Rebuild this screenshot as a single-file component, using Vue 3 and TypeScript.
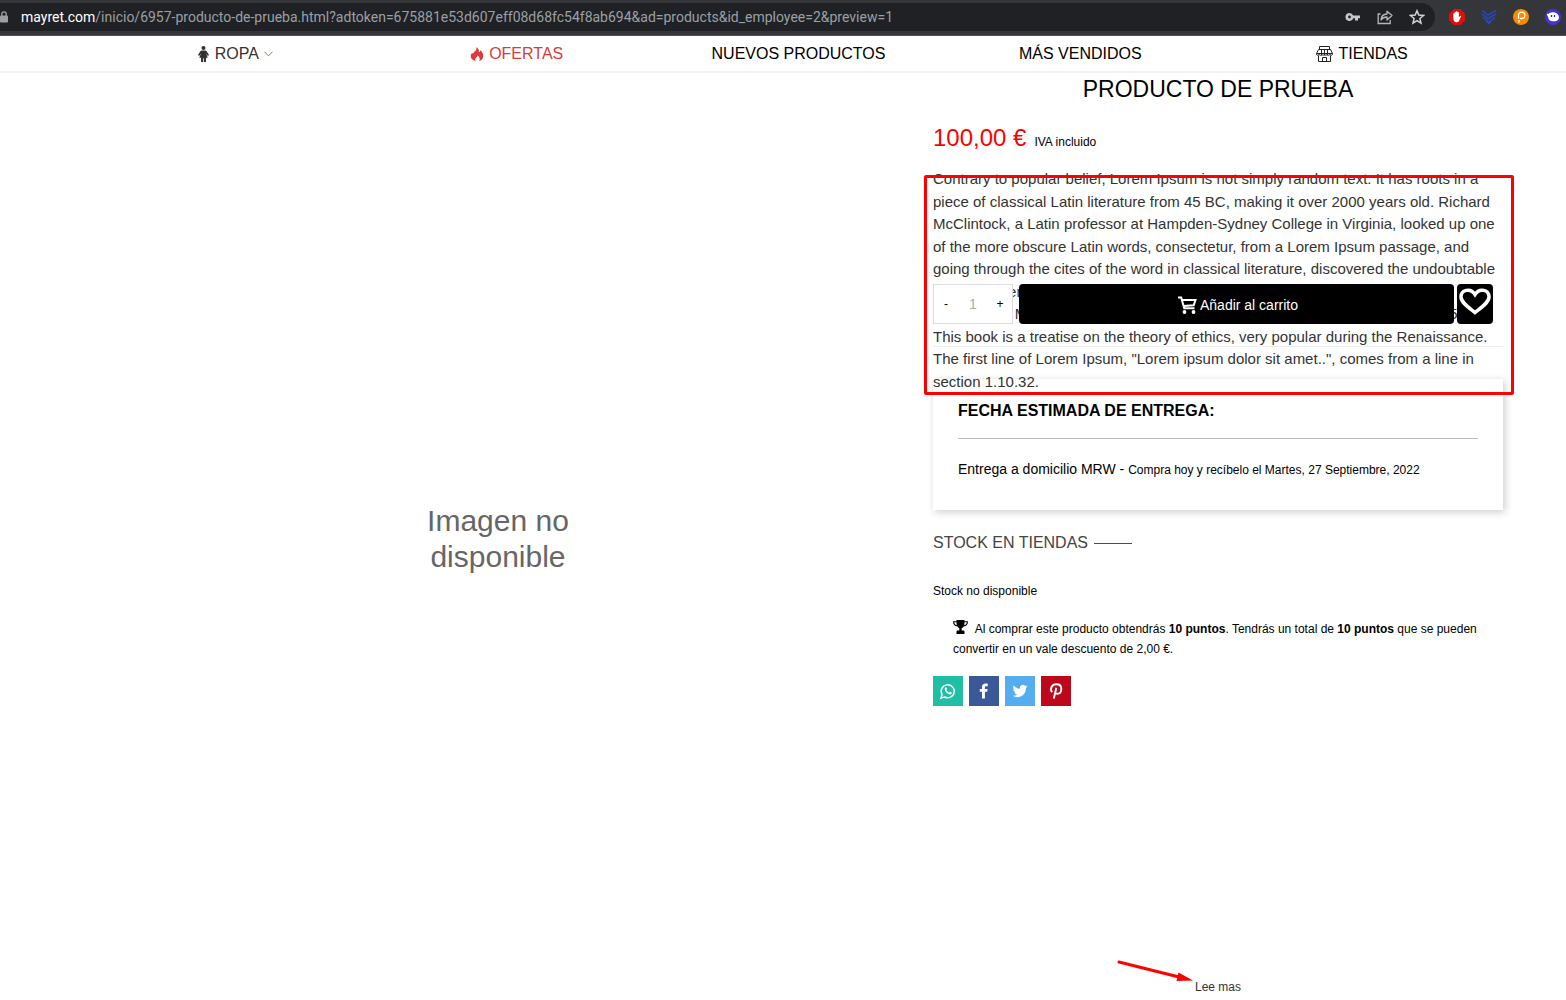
<script setup lang="ts">
import { ref } from 'vue'

const quantity = ref('1')

const description =
  'Contrary to popular belief, Lorem Ipsum is not simply random text. It has roots in a piece of classical Latin literature from 45 BC, making it over 2000 years old. Richard McClintock, a Latin professor at Hampden-Sydney College in Virginia, looked up one of the more obscure Latin words, consectetur, from a Lorem Ipsum passage, and going through the cites of the word in classical literature, discovered the undoubtable source. Lorem Ipsum comes from sections 1.10.32 and 1.10.33 of "de Finibus Bonorum et Malorum" (The Extremes of Good and Evil) by Cicero, written in 45 BC. This book is a treatise on the theory of ethics, very popular during the Renaissance. The first line of Lorem Ipsum, "Lorem ipsum dolor sit amet..", comes from a line in section 1.10.32.'

function step(delta: number) {
  quantity.value = String(Math.max(1, Number(quantity.value) + delta))
}
</script>

<template>
  <div class="page">
    <header class="browser">
      <div class="address">
        <svg class="lock" width="8" height="12" viewBox="0 0 8 12"><rect y="4.500" width="8" height="7" rx="1" fill="#9aa0a6" /><path d="M1.800 5V3a2.200 2.200 0 0 1 4.400 0v2" fill="none" stroke="#9aa0a6" stroke-width="1.300" /></svg>
        <span class="url"><b>mayret.com</b>/inicio/6957-producto-de-prueba.html?adtoken=675881e53d607eff08d68fc54f8ab694&amp;ad=products&amp;id_employee=2&amp;preview=1</span>
        <span class="tools">
          <svg width="16" height="16" viewBox="0 0 16 16"><path fill="#c4c7cb" fill-rule="evenodd" d="M4.500 4a4 4 0 1 0 3.800 5.200H10v2.300h3V9.200h2V6.500H8.200A4 4 0 0 0 4.500 4zm0 2.600a1.400 1.400 0 1 1 0 2.800 1.400 1.400 0 0 1 0-2.800z" /></svg>
          <svg width="16" height="16" viewBox="0 0 16 16" fill="none" stroke="#b4b7bb" stroke-width="1.300"><path d="M3.500 5H1.200v9.500h12V11" /><path d="M4 11c.2-4 2.500-5.800 6-6V2.200l5 4.400-5 4.400V8C7.500 8 5.500 8.800 4 11z" stroke-linejoin="round" /></svg>
          <svg width="16" height="16" viewBox="0 0 16 16"><path d="M8 1.800l1.800 4.300 4.700.4-3.600 3 1.100 4.600L8 11.600l-4 2.500 1.100-4.600-3.600-3 4.700-.4z" fill="none" stroke="#d0d2d5" stroke-width="1.500" /></svg>
        </span>
      </div>
      <div class="extensions">
        <svg width="16" height="16" viewBox="0 0 16 16"><path d="M4.700 0h6.600L16 4.700v6.600L11.300 16H4.700L0 11.300V4.700z" fill="#e40d0d" /><path d="M4.300 8.500V4.600q.7-.7 1.300 0V3.200q.8-.8 1.400 0V2.500q.8-.8 1.500 0v.8q.8-.7 1.400.1v5l1-1.400q.8-.6 1.200.1l-2 4.700q-.7 1.500-2.500 1.500-3.300 0-3.300-4.800z" fill="#fff" /></svg>
        <svg width="16" height="16" viewBox="0 0 16 16" fill="none" stroke="#2748bd" stroke-width="1.500"><path d="M1 1.500l6 4.500 8-4.500M1 5l6 4.500L15 5M2 8.500L8 13l6-4.500M5 12l3 2.500 2-1.500" /></svg>
        <svg width="16" height="16" viewBox="0 0 16 16"><circle cx="8" cy="8" r="8" fill="#fb8c00" /><path d="M5.500 10V6.300A3.200 3.200 0 1 1 8.700 9.500H7M6 11v2.500" fill="none" stroke="#fff" stroke-width="1.300" /></svg>
        <svg width="16" height="16" viewBox="0 0 16 16"><circle cx="8" cy="8" r="8" fill="#4c2fd4" /><path d="M2 4.500q1.500 1 2.500-.5c3-2 9-.5 9.500 4 .1 3.500-2.500 4.500-5.500 4.300C4 12 3.500 10 3.200 8.200 3 7 1.500 6.300 2 4.500z" fill="#fff" /><path d="M6.500 6v2M9.500 6v2" stroke="#3b238f" stroke-width="1.300" /></svg>
      </div>
    </header>

    <nav class="menu" aria-label="Principal">
      <div class="menu-items">
        <a href="#" class="dim">
          <svg width="13" height="16" viewBox="0 0 12 16" fill="#333"><circle cx="6" cy="2" r="2" /><path d="M4.200 4.500h3.600c.6 0 1 .3 1.300.8L11.500 9l-1.100 1L8.600 7.600l1.600 4.100H8.500V16H6.400v-3.700h-.8V16H3.500v-4.300H1.800l1.600-4.100L1.600 10 .5 9l2.400-3.700c.3-.5.7-.8 1.300-.8z" /></svg>
          <span>ROPA</span>
          <svg width="9" height="6" viewBox="0 0 9 6"><path d="M.5.800l4 4 4-4" fill="none" stroke="#777" /></svg>
        </a>
        <a href="#" class="offer">
          <svg width="14" height="16" viewBox="0 0 14 16"><path fill="#dd3b3b" d="M6.500 1c2.500 2.200 2.800 3.800 2.200 5.300 1.200-.3 1.600-1.300 1.600-2.300 2 2 3.200 4.200 3 6.500-.3 2.300-2 4-4.200 4.500 1.200-2 .8-3.800-1.500-5.800-.2 1.300-.8 1.800-1.600 2.600-.8.900-1 1.900-.4 3.200C2.800 14.500.8 12.800.7 10.300.600 8 2 6.800 3.200 7.500c0-1.500 3.800-2.500 3.300-6.500z" /></svg>
          <span>OFERTAS</span>
        </a>
        <a href="#">NUEVOS PRODUCTOS</a>
        <a href="#">MÁS VENDIDOS</a>
        <a href="#">
          <svg width="17" height="16" viewBox="0 0 17 16" fill="none" stroke="#222"><path d="M3.500.5h10v3h-10zM2.500 3.500h12l2 4H.5zM5.500 3.500v6M8.500 3.500v6M11.500 3.500v6M.5 7.500v1q1.200 1.600 2.500 0 1.300 1.600 2.700 0 1.400 1.600 2.800 0 1.400 1.600 2.800 0 1.300 1.600 2.700 0 1.300 1.600 2.500 0v-1M2.500 9.500v6h12v-6M6.500 15.500v-4h4v4" /></svg>
          <span>TIENDAS</span>
        </a>
      </div>
    </nav>

    <main class="product">
      <div class="picture">Imagen no<br />disponible</div>

      <section class="details">
        <h1>PRODUCTO DE PRUEBA</h1>
        <p class="price"><span>100,00 €</span><small>IVA incluido</small></p>

        <div class="description">
          <p>{{ description }}</p>
          <div class="outline"></div>
        </div>

        <div class="purchase">
          <div class="quantity">
            <button type="button" aria-label="Quitar uno" @click="step(-1)">-</button>
            <input v-model="quantity" type="text" aria-label="Cantidad" />
            <button type="button" aria-label="Añadir uno" @click="step(1)">+</button>
          </div>
          <button type="button" class="add">
            <svg width="19" height="18" viewBox="0 0 19 18"><path d="M0 1.500h3.200l3 10.800h10.300M4 4h13.500l-1.800 5.300-10 .7" fill="none" stroke="#fff" stroke-width="2" /><circle cx="6.500" cy="16" r="1.900" fill="#fff" /><circle cx="15.500" cy="16" r="1.900" fill="#fff" /></svg>
            <span>Añadir al carrito</span>
          </button>
          <button type="button" class="wish" aria-label="Añadir a favoritos">
            <svg width="32" height="27" viewBox="0 0 32 27"><path d="M16 24.500C9 19 2 14.500 2 8.800 2 2 11.500-.8 16 6.500 20.500-.8 30 2 30 8.800c0 5.700-7 10.200-14 15.700z" fill="none" stroke="#fff" stroke-width="3.500" /></svg>
          </button>
        </div>

        <section class="delivery">
          <h2>FECHA ESTIMADA DE ENTREGA:</h2>
          <p>Entrega a domicilio MRW - <small>Compra hoy y recíbelo el Martes, 27 Septiembre, 2022</small></p>
        </section>

        <h3>STOCK EN TIENDAS</h3>
        <p class="stock">Stock no disponible</p>
        <p class="points">
          <svg width="15" height="14" viewBox="0 0 15 14"><path d="M3.500 0h8v1.300H15c0 3.300-1.600 5-4.300 5.200-.5.900-1.200 1.500-2 1.700v2.300h1.800c.7 0 1 .6 1 1.300V14h-8v-2.200c0-.7.3-1.300 1-1.300h1.800V8.200c-.8-.2-1.500-.8-2-1.700C1.600 6.300 0 4.600 0 1.300h3.500zM1.200 2.300c.2 1.500 1 2.600 2.500 3L3.500 2.300zm12.600 0h-2.300l-.2 3c1.500-.4 2.300-1.500 2.500-3z" fill-rule="evenodd" /></svg>
          Al comprar este producto obtendrás <b>10 puntos</b>. Tendrás un total de <b>10 puntos</b> que se pueden convertir en un vale descuento de 2,00 €.
        </p>

        <div class="share">
          <a href="#" class="whatsapp" aria-label="WhatsApp"><svg width="16" height="16" viewBox="0 0 16 16"><path d="M1 15l1-3.600A6.500 6.500 0 1 1 4.600 14z" fill="none" stroke="#fff" stroke-width="1.500" /><path d="M5.300 4.500c.5-.5 1-.3 1.200.2l.5 1.200c.1.400-.6 1-.6 1.100.6 1.200 1.400 2 2.700 2.500.2 0 .7-.9 1-.8l1.500.7c.4.300.1 1.200-.4 1.600-1 .8-2.700.3-4.200-.9C5.400 8.800 4 6 5.300 4.500z" fill="#fff" /></svg></a>
          <a href="#" class="facebook" aria-label="Facebook"><svg width="16" height="16" viewBox="0 0 16 16"><path fill="#fff" d="M6 15.500V8.800H3.800V6.100H6V4C6 1.800 7.300.5 9.500.5h2.200V3.200h-1.500c-1 0-1.300.5-1.300 1.300v1.600h2.700l-.4 2.700H8.900v6.700z" /></svg></a>
          <a href="#" class="twitter" aria-label="Twitter"><svg width="16" height="16" viewBox="0 0 16 16"><path fill="#fff" d="M15.500 3.500a6 6 0 0 1-1.700.5 3 3 0 0 0 1.300-1.700 6 6 0 0 1-1.900.7 3 3 0 0 0-5.200 2.800A8.700 8.700 0 0 1 1.700 2.600a3 3 0 0 0 1 4.100 3 3 0 0 1-1.400-.4c0 1.500 1 2.700 2.400 3a3 3 0 0 1-1.300.1 3 3 0 0 0 2.800 2.100 6.200 6.200 0 0 1-4.500 1.300c5.800 3.700 13.300-.3 13.200-7.700.6-.4 1.200-1 1.600-1.600z" /></svg></a>
          <a href="#" class="pinterest" aria-label="Pinterest"><svg width="16" height="16" viewBox="0 0 16 16"><path d="M4.200 9.200C1.500 6.500 3.500 1.300 8.300 1.300c3.200 0 5 2 5 4.500 0 3-1.600 5-3.800 5-1.100 0-2-.7-2.200-1.400M8.300 4.800L5.800 15.500" fill="none" stroke="#fff" stroke-width="1.900" /></svg></a>
        </div>

        <div class="more">
          <a href="#">Lee mas<svg class="arrow" width="76" height="24" viewBox="0 0 76 24"><path d="M2 3l62 15.500" stroke="#f00" stroke-width="3" stroke-linecap="round" /><path d="M61.500 13.500L76 21.500l-16.500.5z" fill="#f00" /></svg></a>
        </div>
      </section>
    </main>
  </div>
</template>

<style>
body {
  margin: 0;
  background: #fff;
}
</style>

<style scoped>
.page {
  font-family: "Liberation Sans", Arial, sans-serif;
  font-size: 12px;
  line-height: 20px;
  color: #000;
}
.page * {
  box-sizing: border-box;
}
svg {
  flex: none;
}
h1, h2, h3, p {
  margin: 0;
  font-weight: 400;
}
a {
  color: inherit;
  text-decoration: none;
}
small {
  font-size: 12px;
  line-height: 12px;
}
button {
  border: 0;
  padding: 0;
  color: inherit;
  font: inherit;
  cursor: pointer;
}
.browser {
  display: flex;
  align-items: center;
  height: 36px;
  padding: 2px 5px 4px 0;
  background: #35363a;
  border-bottom: 1px solid #505155;
}
.address {
  flex: 1;
  display: flex;
  align-items: center;
  height: 28px;
  padding-right: 10px;
  border-radius: 0 14px 14px 0;
  background: #202124;
}
.lock {
  margin-right: 13px;
}
.url {
  font-family: Roboto, "Noto Sans", sans-serif;
  font-size: 14px;
  color: #9aa0a6;
  white-space: nowrap;
}
.url b {
  font-weight: 400;
  color: #fff;
}
.tools, .extensions {
  display: flex;
  gap: 16px;
}
.tools {
  margin-left: auto;
}
.extensions {
  margin-left: 14px;
}
.menu {
  height: 37px;
  border-bottom: 2px solid #f3f3f3;
}
.menu-items {
  display: grid;
  grid-template-columns: repeat(5, 1fr);
  max-width: 1440px;
  margin: 0 auto;
  padding-left: 31px;
}
.menu a {
  display: flex;
  align-items: center;
  justify-content: center;
  gap: 5px;
  height: 35px;
  font-size: 16px;
  white-space: nowrap;
}
.menu .dim {
  color: #333;
}
.menu .offer {
  color: #dd3b3b;
}
.product {
  display: grid;
  grid-template-columns: 29fr 19fr;
  max-width: 1440px;
  margin: 0 auto;
}
.picture {
  padding-top: 430px;
  font-size: 30px;
  line-height: 36px;
  text-align: center;
  color: #666;
}
h1 {
  font-size: 23px;
  line-height: 32px;
  text-align: center;
}
.price {
  display: flex;
  align-items: baseline;
  gap: 8px;
  margin: 15px 0 12px;
  font-size: 24px;
  line-height: 36px;
  color: #f00;
}
.price small {
  color: #000;
}
.description {
  position: relative;
  z-index: 1;
  height: 100px;
  font-size: 15px;
  line-height: 1.5;
  color: #333;
}
.outline {
  position: absolute;
  top: 7px;
  left: -9px;
  right: -11px;
  height: 220px;
  border: 3px solid #f00;
  border-radius: 2px;
}
.purchase {
  display: flex;
  margin-top: 16px;
  padding: 0 10px 22px 0;
  border-bottom: 1px solid #eee;
}
.quantity, .add, .wish {
  position: relative;
  z-index: 2;
  height: 40px;
}
.quantity {
  display: flex;
  width: 80px;
  margin-right: 6px;
  border: 1px solid #ddd;
  background: #fff;
}
.quantity button {
  width: 24px;
  background: none;
}
.quantity input {
  flex: 1;
  min-width: 0;
  border: 0;
  padding: 0;
  background: none;
  font: inherit;
  font-size: 14px;
  text-align: center;
  color: #aaa;
}
.add, .wish {
  display: flex;
  align-items: center;
  justify-content: center;
  border-radius: 4px;
  background: #000;
  color: #fff;
}
.add {
  flex: 1;
  gap: 3px;
  margin-right: 3px;
  padding: 2px 0 0 3px;
  font-size: 14px;
}
.wish {
  width: 36px;
  padding-bottom: 5px;
}
.delivery {
  margin: 32px 0 22px;
  padding: 21px 25px 31px;
  background: #fff;
  box-shadow: 2px 2px 8px rgba(0, 0, 0, 0.2);
}
.delivery h2 {
  padding-bottom: 16px;
  border-bottom: 1px solid #bbb;
  font-size: 16px;
  line-height: 22px;
  font-weight: 700;
}
.delivery p {
  margin-top: 20px;
  font-size: 14px;
}
h3 {
  display: flex;
  align-items: center;
  gap: 6px;
  font-size: 16px;
  line-height: 22px;
  color: #444;
}
h3::after {
  content: "";
  width: 38px;
  height: 1px;
  background: #f00;
}
.stock {
  margin: 27px 0 18px;
}
.points {
  padding: 0 20px;
}
.points svg {
  margin-right: 4px;
  vertical-align: -1px;
}
.share {
  display: flex;
  gap: 6px;
  margin-top: 17px;
}
.share a {
  display: flex;
  align-items: center;
  justify-content: center;
  width: 30px;
  height: 30px;
}
.whatsapp { background: #20bfa5; }
.facebook { background: #3b5998; }
.twitter { background: #55acee; }
.pinterest { background: #bd081c; }
.more {
  margin-top: 271px;
  text-align: center;
  color: #333;
}
.more a {
  position: relative;
}
.arrow {
  position: absolute;
  right: 100%;
  bottom: 11px;
  margin-right: 2px;
}
</style>
